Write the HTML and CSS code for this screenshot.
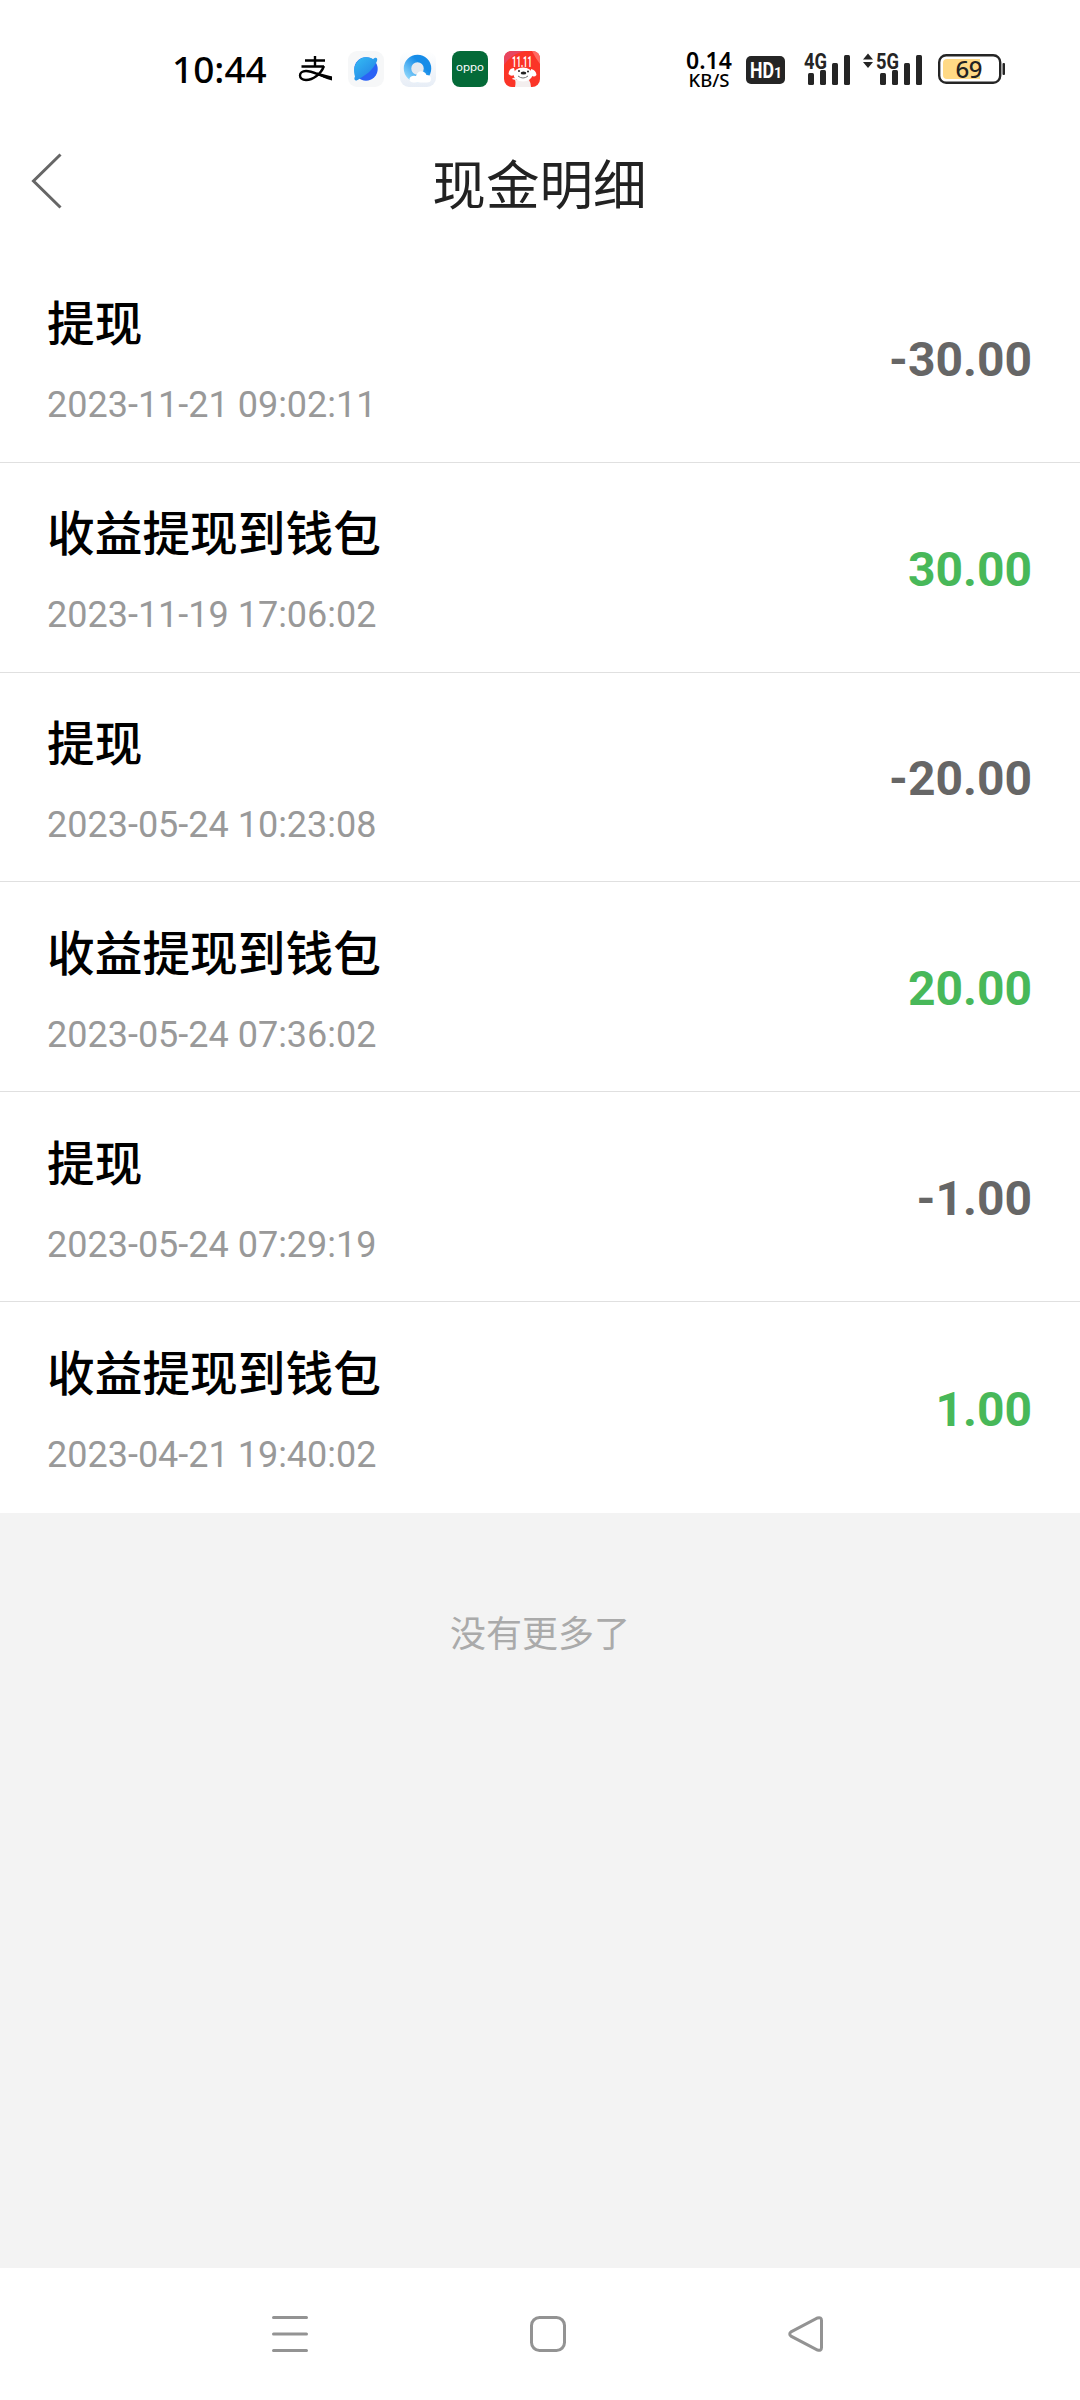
FILE: index.html
```html
<!DOCTYPE html>
<html lang="zh-CN">
<head>
    <meta charset="UTF-8">
    <meta name="viewport" content="width=device-width, initial-scale=1.0">
    <title>现金明细</title>
    <link rel="stylesheet" href="styles.css">
</head>
<body>
    <div class="status-bar">
        <span class="clock">10:44</span>
        <div class="app-icons">
            <svg class="alipay" width="34" height="26" viewBox="0 0 34 26">
                <path d="M6 4.5H26M2.5 10.5H25M16 0V10M25 10C22 18 14 24 7 24C-1 24 -1 15 7 15C15 15 22 21 33 22" fill="none" stroke="#000" stroke-width="2.4"/>
                <path d="M18 16.5L33 20.5V24.5Q24 22 18 18Z"/>
            </svg>
            <svg width="36" height="36" viewBox="0 0 36 36">
                <defs>
                    <linearGradient id="planet" x1="0" y1="0" x2="0.8" y2="1">
                        <stop offset="0" stop-color="#35bdf3"/>
                        <stop offset="1" stop-color="#237fe5"/>
                    </linearGradient>
                </defs>
                <rect width="36" height="36" rx="9" fill="#f6f7f8"/>
                <circle cx="18" cy="18" r="11.7" fill="#2b62f5"/>
                <path d="M7 25.5C3.5 13 12 5.5 19 6.3C22 6.3 24 7.5 25 8.2C28 5.5 30 7 29 10C25 20 16 25 11 28C8 31 5 29 7 25.5Z" fill="url(#planet)"/>
            </svg>
            <svg width="36" height="36" viewBox="0 0 36 36">
                <defs>
                    <linearGradient id="ring" x1="1" y1="0" x2="0" y2="1">
                        <stop offset="0.3" stop-color="#168ce8"/>
                        <stop offset="1" stop-color="#8dd6fb"/>
                    </linearGradient>
                    <linearGradient id="tile" x1="0" y1="0" x2="0" y2="1">
                        <stop offset="0" stop-color="#ffffff"/>
                        <stop offset="1" stop-color="#e7edf6"/>
                    </linearGradient>
                </defs>
                <rect width="36" height="36" rx="9" fill="url(#tile)"/>
                <circle cx="17.5" cy="17.5" r="10" fill="#e6eaf0" stroke="url(#ring)" stroke-width="7.5"/>
                <path d="M13 31.5Q9 31 9.5 27.5Q11 24 16 25Q18 19 23 20.5Q26 21.5 26.5 24Q31 24 31 28Q31 31.5 27 31.5Z" fill="#fff"/>
            </svg>
            <svg width="36" height="36" viewBox="0 0 36 36">
                <rect width="36" height="36" rx="8" fill="#046a38"/>
                <text class="oppo-text" x="4" y="20" textLength="28" lengthAdjust="spacingAndGlyphs">oppo</text>
            </svg>
            <svg width="36" height="36" viewBox="0 0 36 36">
                <rect width="36" height="36" rx="8" fill="#fb3427"/>
                <path d="M0 14V8Q0 0 8 0H21Q7 3 0 14Z" fill="#e8455e"/>
                <path d="M28 0Q36 0 36 8V13Q32 8 28 0Z" fill="#ff6b62"/>
                <text class="sale-text" x="8" y="15.5" textLength="20" lengthAdjust="spacingAndGlyphs">11.11</text>
                <!-- dog mascot -->
                <path d="M10 17Q5 17 4.5 23Q7 26 10 24L11 21ZM27 18Q32 19 32.5 24Q30 27 27 24Z" fill="#fff"/>
                <path d="M11 36Q12 31 11 29L8 28Q9 26 12 27L14 36ZM12 36V29H25Q27 32 27 36Z" fill="#f3eeee"/>
                <ellipse cx="19" cy="23.5" rx="9.5" ry="7" fill="#fff"/>
                <ellipse cx="19.5" cy="22" rx="2.8" ry="1.6" fill="#222"/>
                <circle cx="15" cy="20" r="1" fill="#222"/>
                <circle cx="24" cy="20.5" r="1" fill="#222"/>
                <path d="M14 25Q19 29 24 25" fill="none" stroke="#777" stroke-width="1"/>
            </svg>
        </div>
        <div class="net-speed">
            <span class="speed">0.14</span>
            <span class="unit">KB/S</span>
        </div>
        <svg class="hd" width="39" height="28" viewBox="0 0 39 28">
            <rect width="39" height="28" rx="5" fill="#252525"/>
            <text class="hd-text" x="4" y="21.5" textLength="24" lengthAdjust="spacingAndGlyphs">HD</text>
            <text class="hd-num" x="28" y="22">1</text>
        </svg>
        <svg class="signal" width="47" height="34" viewBox="0 0 47 34">
            <text class="net-text" x="0" y="16.5" textLength="23" lengthAdjust="spacingAndGlyphs">4G</text>
            <g fill="#252525">
                <rect x="4" y="21" width="6" height="12" rx="1.5"/>
                <rect x="16" y="18" width="6" height="15" rx="1.5"/>
                <rect x="28" y="11" width="6" height="22" rx="1.5"/>
                <rect x="40" y="3" width="6" height="30" rx="1.5"/>
            </g>
        </svg>
        <svg class="signal signal-5g" width="60" height="34" viewBox="0 0 60 34">
            <path d="M0 7.5L5 1.5L10 7.5ZM0 10L5 16L10 10Z" fill="#252525"/>
            <text class="net-text" x="13" y="16.5" textLength="23" lengthAdjust="spacingAndGlyphs">5G</text>
            <g fill="#252525">
                <rect x="17" y="21" width="6" height="12" rx="1.5"/>
                <rect x="29" y="18" width="6" height="15" rx="1.5"/>
                <rect x="41" y="11" width="6" height="22" rx="1.5"/>
                <rect x="53" y="3" width="6" height="30" rx="1.5"/>
            </g>
        </svg>
        <svg class="battery" width="68" height="30" viewBox="0 0 68 30">
            <path d="M9 5H42V25H9Q5 25 5 21V9Q5 5 9 5Z" fill="#ffd985"/>
            <rect x="1.2" y="1.2" width="61" height="27.6" rx="7" fill="none" stroke="#252525" stroke-width="2.4"/>
            <rect x="64.5" y="9" width="2.5" height="12" rx="1" fill="#252525"/>
            <text class="battery-text" x="17.5" y="24" textLength="27">69</text>
        </svg>
    </div>

    <div class="header">
        <svg class="back" width="30" height="56" viewBox="0 0 30 56">
            <path d="M29.5 1.5L2.5 28L29.5 54.5" fill="none" stroke="#666" stroke-width="3"/>
        </svg>
        <h1>现金明细</h1>
    </div>

    <ul class="list">
        <li class="item">
            <div class="info">
                <p class="name">提现</p>
                <p class="time">2023-11-21 09:02:11</p>
            </div>
            <span class="amount">-30.00</span>
        </li>
        <li class="item">
            <div class="info">
                <p class="name">收益提现到钱包</p>
                <p class="time">2023-11-19 17:06:02</p>
            </div>
            <span class="amount income">30.00</span>
        </li>
        <li class="item">
            <div class="info">
                <p class="name">提现</p>
                <p class="time">2023-05-24 10:23:08</p>
            </div>
            <span class="amount">-20.00</span>
        </li>
        <li class="item">
            <div class="info">
                <p class="name">收益提现到钱包</p>
                <p class="time">2023-05-24 07:36:02</p>
            </div>
            <span class="amount income">20.00</span>
        </li>
        <li class="item">
            <div class="info">
                <p class="name">提现</p>
                <p class="time">2023-05-24 07:29:19</p>
            </div>
            <span class="amount">-1.00</span>
        </li>
        <li class="item">
            <div class="info">
                <p class="name">收益提现到钱包</p>
                <p class="time">2023-04-21 19:40:02</p>
            </div>
            <span class="amount income">1.00</span>
        </li>
    </ul>

    <p class="no-more">没有更多了</p>

    <div class="nav-bar">
        <svg width="36" height="36" viewBox="0 0 36 36">
            <path d="M1.5 1.5H34.5M1.5 18H34.5M1.5 34.5H34.5"/>
        </svg>
        <svg width="36" height="36" viewBox="0 0 36 36">
            <rect x="1.5" y="1.5" width="33" height="33" rx="8"/>
        </svg>
        <svg width="36" height="36" viewBox="0 0 36 36">
            <path d="M3 15.8L29.5 2Q33.5 0.8 33.5 4.5V31.5Q33.5 35.2 29.5 34L3 20.2Q0.5 18 3 15.8Z"/>
        </svg>
    </div>
</body>
</html>
```
FILE: styles.css
```css
* {
    margin: 0;
    padding: 0;
    box-sizing: border-box;
}

body {
    display: flex;
    flex-direction: column;
    height: 2400px;
    background-color: #f3f3f3;
    font-family: Roboto, "Noto Sans CJK SC", sans-serif;
}

svg {
    display: block;
    flex-shrink: 0;
    overflow: visible;
}

/* Status bar */
.status-bar {
    display: flex;
    align-items: center;
    height: 138px;
    padding-left: 172px;
    background-color: #fff;
    color: #000;
}

.clock {
    width: 127px;
    font-family: "Noto Sans", sans-serif;
    font-size: 37px;
    font-weight: 500;
    line-height: 40px;
}

.app-icons {
    display: flex;
    align-items: center;
    gap: 16px;
}

.alipay {
    margin-right: -1px;
}

.oppo-text {
    font-family: Inter, sans-serif;
    font-size: 10px;
    fill: #fff;
}

.sale-text {
    font-family: Roboto, sans-serif;
    font-size: 15px;
    font-weight: 700;
    fill: #fff;
}

.net-speed {
    display: flex;
    flex-direction: column;
    align-items: center;
    width: 50px;
    margin-left: 144px;
    font-family: "Noto Sans", sans-serif;
    font-weight: 600;
}

.speed {
    font-size: 23px;
    line-height: 21px;
}

.unit {
    font-size: 18.5px;
    font-weight: 500;
    line-height: 18px;
}

.hd {
    margin-top: 2px;
    margin-left: 12px;
}

.hd-text {
    font-family: Roboto, sans-serif;
    font-size: 22px;
    font-weight: 700;
    fill: #fff;
}

.hd-num {
    font-family: Roboto, sans-serif;
    font-size: 14px;
    font-weight: 700;
    fill: #fff;
}

.signal {
    margin-left: 19px;
}

.signal-5g {
    margin-left: 12px;
}

.net-text {
    font-family: Roboto, sans-serif;
    font-size: 22px;
    font-weight: 700;
    fill: #252525;
}

.battery {
    margin-left: 15px;
}

.battery-text {
    font-family: "Noto Sans", sans-serif;
    font-size: 24px;
    font-weight: 500;
    fill: #222;
}

/* Page header */
.header {
    display: grid;
    grid-template-columns: 60px 1fr 60px;
    align-items: center;
    height: 115px;
    padding: 0 32px 0 31px;
    background-color: #fff;
}

.back {
    margin-top: -29px;
}

h1 {
    margin-top: -18px;
    font-size: 53.6px;
    font-weight: 400;
    line-height: 80px;
    text-align: center;
    color: #222;
}

/* Cash records */
.list {
    list-style: none;
    background-color: #fff;
}

.item {
    display: flex;
    align-items: center;
    justify-content: space-between;
    height: 209.8px;
    padding: 7px 48px 0 47px;
    border-bottom: 1px solid #e0e0e0;
}

.item:last-child {
    height: 211px;
    border-bottom: none;
}

.name {
    font-size: 47.7px;
    font-weight: 500;
    line-height: 72px;
    color: #000;
}

.time {
    margin-top: 17px;
    font-size: 36px;
    line-height: 54px;
    color: #999;
}

.amount {
    padding-bottom: 3px;
    font-size: 48px;
    font-weight: 700;
    color: #666;
}

.income {
    color: #48b859;
}

.no-more {
    flex: 1;
    padding-top: 95px;
    font-size: 36px;
    line-height: 54px;
    text-align: center;
    color: #aaa;
}

/* System navigation */
.nav-bar {
    display: flex;
    justify-content: space-between;
    height: 132px;
    padding: 48px 256px 0 272px;
    background-color: #fff;
    fill: none;
    stroke: #939393;
    stroke-width: 3;
    stroke-linecap: round;
}
```
